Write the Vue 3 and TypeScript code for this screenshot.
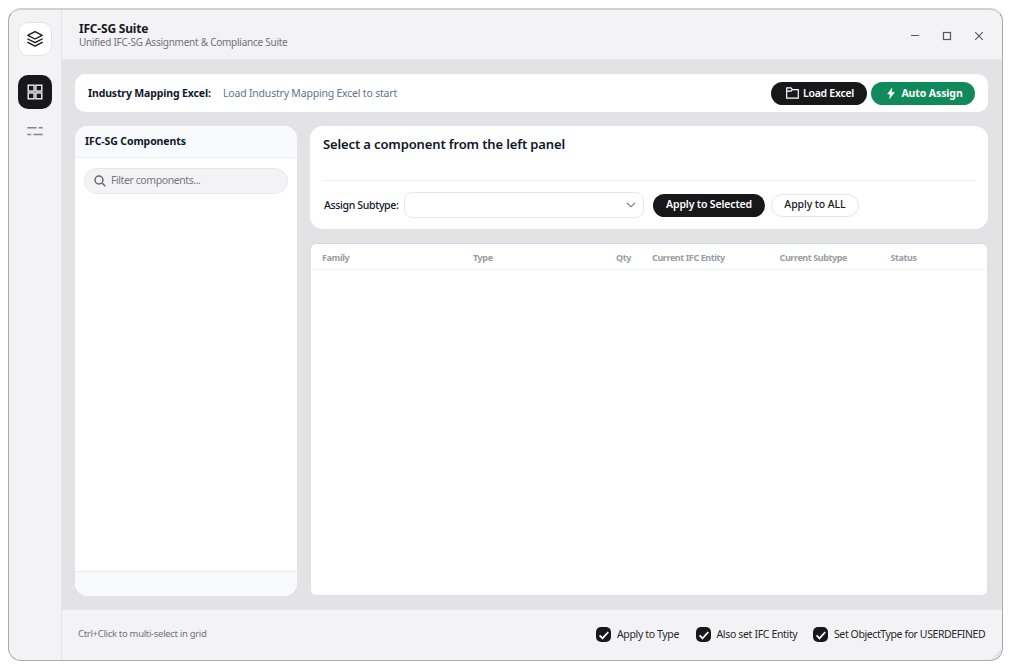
<script setup lang="ts">
import { ref } from 'vue'

interface Column {
  label: string
  key: string
}

interface Option {
  label: string
  key: string
  checked: boolean
}

const columns: Column[] = [
  { label: 'Family', key: 'family' },
  { label: 'Type', key: 'type' },
  { label: 'Qty', key: 'qty' },
  { label: 'Current IFC Entity', key: 'entity' },
  { label: 'Current Subtype', key: 'subtype' },
  { label: 'Status', key: 'status' },
]

const options = ref<Option[]>([
  { label: 'Apply to Type', key: 'opt-type', checked: true },
  { label: 'Also set IFC Entity', key: 'opt-entity', checked: true },
  { label: 'Set ObjectType for USERDEFINED', key: 'opt-object', checked: true },
])
</script>

<template>
  <div class="window">
    <aside class="rail">
      <div class="tile logo">
        <svg width="18" height="18" viewBox="0 0 18 18" fill="none" stroke="#18181b" stroke-width="1.3" stroke-linejoin="round" stroke-linecap="round">
          <path d="M9 1.6 16.2 5.3 9 9 1.8 5.3Z" />
          <path d="M1.8 9 9 12.7 16.2 9" />
          <path d="M1.8 12.4 9 16.1 16.2 12.4" />
        </svg>
      </div>
      <div class="tile active">
        <svg width="16" height="16" viewBox="0 0 16 16" fill="none" stroke="#f0f0f1" stroke-width="1.4">
          <rect x="1.2" y="1.2" width="5.9" height="5.9" />
          <rect x="8.9" y="1.2" width="5.9" height="5.9" />
          <rect x="1.2" y="8.9" width="5.9" height="5.9" />
          <rect x="8.9" y="8.9" width="5.9" height="5.9" />
        </svg>
      </div>
      <svg class="list" width="18" height="12" viewBox="0 0 18 12" fill="none" stroke="#85858c" stroke-width="1.5">
        <path d="M1.3 2.7H10.6M12.6 2.7H16.7M1.3 9.4H5.2M7.4 9.4H16.7" />
      </svg>
    </aside>

    <div class="main">
      <header class="titlebar">
        <div class="titles">
          <div class="title"><span>IFC-SG Suite</span></div>
          <div class="subtitle"><span>Unified IFC-SG Assignment &amp; Compliance Suite</span></div>
        </div>
        <div class="controls">
          <svg width="10" height="10" viewBox="0 0 10 10" stroke="#55565a"><path d="M1 4.5H9" /></svg>
          <svg width="10" height="10" viewBox="0 0 10 10" fill="none" stroke="#55565a" stroke-width="1.2"><rect x="1.5" y="1.5" width="7" height="7" /></svg>
          <svg width="10" height="10" viewBox="0 0 10 10" stroke="#55565a" stroke-width="1.1"><path d="M1.2 1.2 8.8 8.8M8.8 1.2 1.2 8.8" /></svg>
        </div>
      </header>

      <main class="body">
        <section class="card toolbar">
          <span class="map-label">Industry Mapping Excel:</span>
          <span class="map-value">Load Industry Mapping Excel to start</span>
          <button class="btn dark load">
            <svg width="13" height="12" viewBox="0 0 13 12" fill="none" stroke="#fff" stroke-width="1.2"><path d="M.7 11.2V.8H5l1.4 1.8h5.9v8.6ZM.7 4.2H5l1.4-1.6" /></svg>
            <span>Load Excel</span>
          </button>
          <button class="btn green auto">
            <svg width="8" height="11" viewBox="0 0 8 11" fill="#fff" stroke="#fff" stroke-width=".5"><path d="M4.8 .3 .6 6H3.2L2.6 10.7 7.4 4.5H4.7Z" /></svg>
            <span>Auto Assign</span>
          </button>
        </section>

        <div class="columns">
          <section class="card components">
            <div class="panel-head"><span>IFC-SG Components</span></div>
            <div class="panel-body">
              <div class="search">
                <svg width="12" height="12" viewBox="0 0 12 12" fill="none" stroke="#65656c" stroke-width="1.5"><circle cx="5" cy="5" r="4" /><path d="m8 8 3.3 3.3" /></svg>
                <span>Filter components...</span>
              </div>
            </div>
            <div class="panel-foot"></div>
          </section>

          <div class="detail">
            <section class="card assign">
              <h1><span>Select a component from the left panel</span></h1>
              <div class="assign-row">
                <label>Assign Subtype:</label>
                <div class="select">
                  <svg width="10" height="6" viewBox="0 0 10 6" fill="none" stroke="#6b6b70" stroke-width="1.1"><path d="m1 .8 4 4 4-4" /></svg>
                </div>
                <button class="btn dark selected"><span>Apply to Selected</span></button>
                <button class="btn light all"><span>Apply to ALL</span></button>
              </div>
            </section>

            <section class="grid">
              <div class="grid-head">
                <div v-for="c in columns" :key="c.key" :class="c.key"><span>{{ c.label }}</span></div>
              </div>
            </section>
          </div>
        </div>
      </main>

      <footer class="footer">
        <span class="hint">Ctrl+Click to multi-select in grid</span>
        <div v-for="o in options" :key="o.key" class="option" :class="o.key" @click="o.checked = !o.checked">
          <span class="box">
            <svg v-if="o.checked" width="15" height="15" viewBox="0 0 15 15" fill="none" stroke="#fff" stroke-width="1.7"><path d="M3.6 8.4 6.5 11.4 12.3 5" /></svg>
          </span>
          <span class="option-label">{{ o.label }}</span>
        </div>
      </footer>
    </div>
    <svg class="grip" width="12" height="12" viewBox="0 0 12 12" stroke="#b9c2cf" stroke-width="1.2" stroke-dasharray="1.2 .8"><path d="M1 11 11 1M4.5 11 11 4.5M8 11 11 8" /></svg>
  </div>
</template>

<style>
body {
  background: #fff;
}
</style>

<style scoped>
* {
  box-sizing: border-box;
}

.window {
  position: relative;
  display: flex;
  width: 995px;
  height: 653px;
  margin: 8px 0 0 8px;
  border: 1px solid #a9a9b2;
  border-top: 2px solid #d0d0d5;
  border-radius: 13px;
  background: #f3f3f5;
  font-family: 'Noto Sans', 'Open Sans', sans-serif;
  font-size: 10.5px;
  color: #0f172a;
  white-space: nowrap;
  overflow: hidden;
}

.rail {
  display: flex;
  flex-direction: column;
  align-items: center;
  width: 53px;
  border-right: 1px solid #e4e4e7;
  padding-top: 12px;
}

.tile {
  display: flex;
  align-items: center;
  justify-content: center;
  width: 34px;
  height: 34px;
  border-radius: 10px;
}

.logo {
  border: 1px solid #e4e4e7;
  background: #fff;
}

.active {
  margin-top: 19px;
  background: #18181b;
}

.list {
  margin-top: 16px;
}

.main {
  display: flex;
  flex: 1;
  flex-direction: column;
}

.titlebar {
  display: flex;
  justify-content: space-between;
  height: 50px;
  padding: 11px 18px 0 17px;
  border-bottom: 1px solid #e6e6e9;
}

.title {
  height: 14px;
  font-size: 12px;
  font-weight: 700;
  line-height: 15px;
  letter-spacing: -0.2px;
  color: #18181b;
}

.subtitle {
  height: 14px;
  font-size: 10px;
  line-height: 14px;
  letter-spacing: -0.25px;
  color: #71717a;
}

.controls {
  display: flex;
  gap: 22px;
  padding-top: 10px;
}

.body {
  flex: 1;
  padding: 14px 14px 0 13px;
  background: #e3e3e5;
}

.card {
  background: #fff;
  border-radius: 13px;
}

.toolbar {
  display: flex;
  align-items: center;
  height: 38px;
  padding: 0 13px;
  border-radius: 10px;
}

.map-label {
  width: 135px;
  font-weight: 700;
  letter-spacing: -0.14px;
}

.map-value {
  flex: 1;
  color: #64748b;
  letter-spacing: -0.2px;
}

.btn {
  display: flex;
  align-items: center;
  justify-content: center;
  height: 23px;
  padding: 0;
  border: 0;
  border-radius: 12px;
  font: 600 10.5px 'Noto Sans', 'Open Sans', sans-serif;
  line-height: 22px;
}

.btn span {
  margin-bottom: 1px;
}

.dark {
  background: #18181b;
  color: #fff;
}

.green {
  background: #108a5b;
  color: #fff;
}

.light {
  border: 1px solid #e4e4e7;
  background: #fff;
  color: #18181b;
}

.load {
  gap: 4px;
  width: 96px;
  padding-left: 2px;
  letter-spacing: -0.25px;
}

.auto {
  gap: 6px;
  width: 104px;
  margin-left: 4px;
  padding-left: 4px;
  font-weight: 700;
  letter-spacing: -0.1px;
}

.columns {
  display: flex;
  gap: 13px;
  height: 470px;
  margin-top: 14px;
}

.components {
  display: flex;
  flex-direction: column;
  width: 222px;
  overflow: hidden;
}

.panel-head {
  height: 32px;
  padding-left: 10px;
  border-bottom: 1px solid #edf1f5;
  background: #f8fafc;
  font-weight: 700;
  line-height: 31px;
  letter-spacing: -0.1px;
}

.panel-body {
  flex: 1;
  padding: 10px 9px;
}

.search {
  display: flex;
  align-items: center;
  gap: 5px;
  height: 26px;
  padding-left: 9px;
  border: 1px solid #e8e8eb;
  border-radius: 13px;
  background: #f3f3f5;
  color: #77777e;
  letter-spacing: -0.42px;
}

.search span {
  line-height: 22px;
  margin-bottom: 2px;
}

.panel-foot {
  height: 25px;
  border-top: 1px solid #e9ebef;
  background: #f8fafc;
}

.detail {
  display: flex;
  flex: 1;
  flex-direction: column;
  gap: 14px;
}

.assign {
  height: 103px;
  padding: 0 12px 0 13px;
}

h1 {
  height: 55px;
  margin: 0;
  padding-top: 9px;
  border-bottom: 1px solid #e9ecf2;
  font-size: 13px;
  font-weight: 600;
  line-height: 19px;
  letter-spacing: -0.13px;
}

.assign-row {
  display: flex;
  align-items: center;
  height: 48px;
}

label {
  width: 81px;
  padding: 0 0 1px 1px;
  font-weight: 500;
  letter-spacing: -0.34px;
}

.select {
  display: flex;
  align-items: center;
  justify-content: flex-end;
  width: 240px;
  height: 26px;
  padding-right: 7px;
  border: 1px solid #e8e8eb;
  border-radius: 8px;
}

.selected {
  width: 112px;
  margin-left: 9px;
  letter-spacing: -0.15px;
}

.all {
  width: 88px;
  margin-left: 6px;
  font-weight: 500;
  letter-spacing: -0.08px;
}

.selected span,
.all span {
  margin-bottom: 2px;
}

.grid {
  flex: 1;
  border: 1px solid #dbe0ea;
  border-top-color: #d3d9e5;
  border-radius: 6px;
  background: #fff;
  padding: 0 2px;
}

.grid-head {
  display: flex;
  height: 26px;
  padding-left: 9px;
  border-bottom: 1px solid #eceff5;
  color: #9b9ba3;
  font-size: 9px;
  font-weight: 700;
  line-height: 28px;
  letter-spacing: -0.4px;
}

.family { width: 151px; }
.type { width: 143px; }
.qty { width: 36px; }
.entity { width: 127.5px; }
.subtype { width: 111px; }

.footer {
  display: flex;
  align-items: center;
  height: 51px;
  padding: 0 0 2px 16px;
  border-top: 1px solid #e9e9eb;
}

.hint {
  width: 518px;
  padding-bottom: 2px;
  color: #71717a;
  font-size: 9.5px;
  letter-spacing: -0.31px;
}

.option {
  display: flex;
  align-items: center;
  gap: 6px;
  color: #27272a;
}

.opt-type { width: 99.5px; letter-spacing: -0.36px; }
.opt-entity { width: 117.5px; letter-spacing: -0.34px; }
.opt-object { letter-spacing: -0.4px; }

.box {
  width: 15px;
  height: 15px;
  margin-top: 1px;
  border-radius: 5px;
  background: #18181b;
}

.box svg {
  display: block;
}

.grip {
  position: absolute;
  right: -1px;
  bottom: -1px;
}
</style>
